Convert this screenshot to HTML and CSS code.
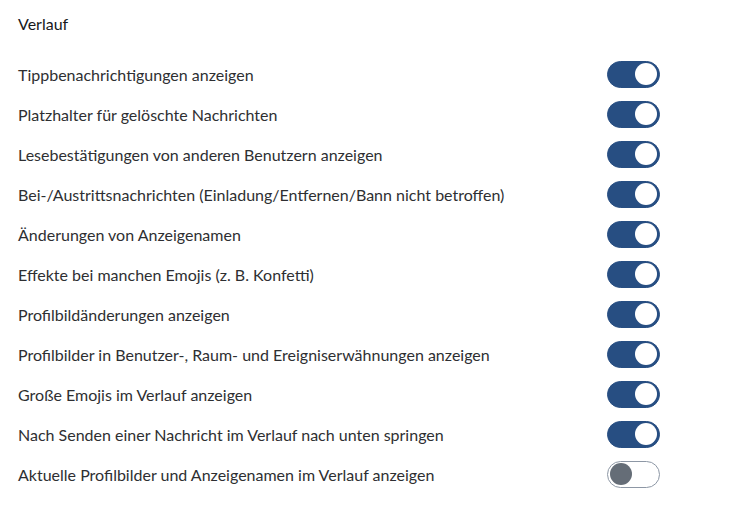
FILE: index.html
```html
<!DOCTYPE html>
<html lang="de">
<head>
  <meta charset="UTF-8">
  <title>Verlauf</title>
  <link rel="stylesheet" href="styles.css">
</head>
<body>
  <div class="section">
    <h3 class="section-title">Verlauf</h3>
    <div class="setting">
      <span class="label">Tippbenachrichtigungen anzeigen</span>
      <span class="toggle on"><span class="knob"></span></span>
    </div>
    <div class="setting">
      <span class="label">Platzhalter für gelöschte Nachrichten</span>
      <span class="toggle on"><span class="knob"></span></span>
    </div>
    <div class="setting">
      <span class="label">Lesebestätigungen von anderen Benutzern anzeigen</span>
      <span class="toggle on"><span class="knob"></span></span>
    </div>
    <div class="setting">
      <span class="label">Bei-/Austrittsnachrichten (Einladung/Entfernen/Bann nicht betroffen)</span>
      <span class="toggle on"><span class="knob"></span></span>
    </div>
    <div class="setting">
      <span class="label">Änderungen von Anzeigenamen</span>
      <span class="toggle on"><span class="knob"></span></span>
    </div>
    <div class="setting">
      <span class="label">Effekte bei manchen Emojis (z. B. Konfetti)</span>
      <span class="toggle on"><span class="knob"></span></span>
    </div>
    <div class="setting">
      <span class="label">Profilbildänderungen anzeigen</span>
      <span class="toggle on"><span class="knob"></span></span>
    </div>
    <div class="setting">
      <span class="label">Profilbilder in Benutzer-, Raum- und Ereigniserwähnungen anzeigen</span>
      <span class="toggle on"><span class="knob"></span></span>
    </div>
    <div class="setting">
      <span class="label">Große Emojis im Verlauf anzeigen</span>
      <span class="toggle on"><span class="knob"></span></span>
    </div>
    <div class="setting">
      <span class="label">Nach Senden einer Nachricht im Verlauf nach unten springen</span>
      <span class="toggle on"><span class="knob"></span></span>
    </div>
    <div class="setting">
      <span class="label">Aktuelle Profilbilder und Anzeigenamen im Verlauf anzeigen</span>
      <span class="toggle"><span class="knob"></span></span>
    </div>
  </div>
</body>
</html>
```

FILE: styles.css
```css
body {
  margin: 0;
  background: #ffffff;
  font-family: Lato, "Open Sans", sans-serif;
  color: #2e2f32;
}
.section {
  width: 642px;
  padding: 14px 0 0 18px;
}
.section-title {
  margin: 0 0 20px;
  font-size: 16px;
  font-weight: normal;
  line-height: 20px;
  color: #17191c;
}
.setting {
  display: flex;
  align-items: center;
  justify-content: space-between;
  height: 40px;
}
.label {
  font-size: 16px;
  line-height: 20px;
  padding-top: 2px;
}
.toggle {
  box-sizing: border-box;
  display: flex;
  align-items: center;
  width: 53px;
  height: 27px;
  padding: 0 2px;
  border: 1px solid #8d97a5;
  border-radius: 14px;
  background: #ffffff;
}
.toggle .knob {
  width: 22px;
  height: 22px;
  border-radius: 50%;
  background: #656d77;
}
.toggle.on {
  justify-content: flex-end;
  border-color: #274e82;
  background: #274e82;
}
.toggle.on .knob {
  background: #ffffff;
}
```
